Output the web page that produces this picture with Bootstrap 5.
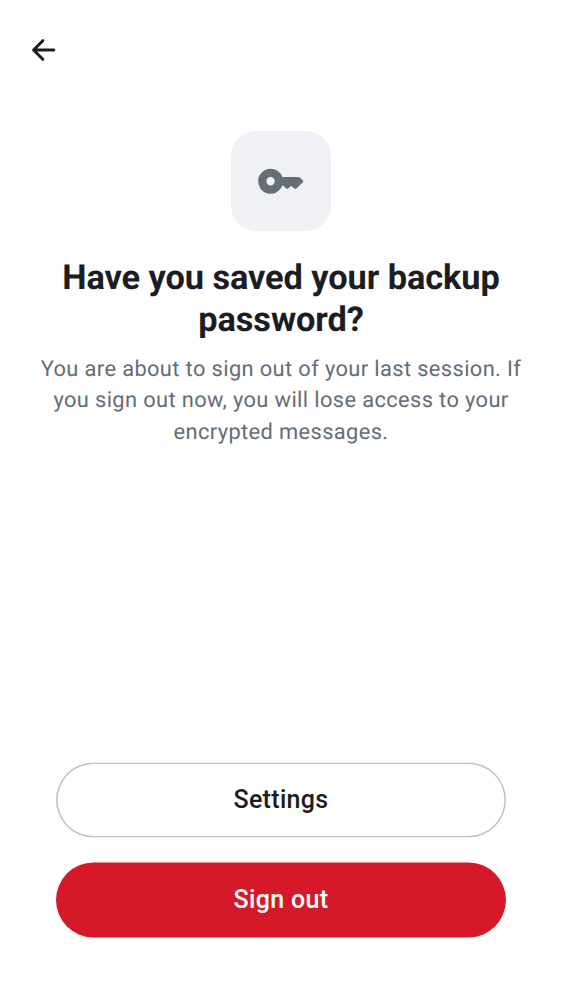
<!DOCTYPE html>
<html lang="en">
<head>
<meta charset="utf-8">
<meta name="viewport" content="width=device-width, initial-scale=1">
<title>Sign out</title>
<link href="https://cdn.jsdelivr.net/npm/bootstrap@5.3.0/dist/css/bootstrap.min.css" rel="stylesheet">
<style>
body { font-family: Roboto, sans-serif; background: #fff; color: #1b1d22; text-rendering: geometricPrecision; }
.screen { height: 1000px; padding: 31px 28px 62px; }
.back-btn { width: 31px; height: 38px; }
.key-tile { width: 100px; height: 100px; margin-top: 62px; border-radius: 25px; background: #f0f1f5; }
.headline { font-size: 34.375px; line-height: 42px; font-weight: 700; letter-spacing: -.08px; margin: 26px 0 13px; }
.message { font-size: 21.875px; line-height: 31.25px; letter-spacing: .37px; color: #656d77; margin: 0 -10px; }
.action { height: 75px; border: 0; border-radius: 38px; font-size: 25px; font-weight: 500; letter-spacing: .32px; padding-bottom: 7px; }
.action-outline { box-shadow: inset 0 0 0 1.56px #bdc3cc; color: #1b1d22; }
.action-danger, .action-danger:hover { background: #d51928; color: #fff; }
.actions { gap: 25px; margin: 0 28px; transform: translateY(-.5px); }
</style>
</head>
<body>
<main class="screen d-flex flex-column">
  <button class="btn back-btn border-0 p-0 d-flex align-items-center justify-content-center" aria-label="Back">
    <svg width="31" height="38" viewBox="0 0 31 38" class="flex-shrink-0" fill="none" stroke="#1b1d22" stroke-width="3" stroke-linecap="round" stroke-linejoin="round"><path d="M14.8 9.7 5.6 19l9.2 9.3M5.6 19h20.2"/></svg>
  </button>
  <div class="key-tile d-flex align-items-center justify-content-center align-self-center">
    <svg width="50" height="50" viewBox="0 0 50 50" fill="#656d77"><path fill-rule="evenodd" d="M14.6 12.7A12.5 12.5 0 1 0 26.4 29.4H27L30.4 32.4Q31.3 33.2 32.2 32.5L35 30.1 38.5 32.6Q39.4 33.3 40.3 32.5L46.9 26.3Q47.7 25.4 46.9 24.4L44 21.6Q43.3 21 42.4 21H26.4A12.5 12.5 0 0 0 14.6 12.7ZM14.6 21A4.2 4.2 0 1 1 14.6 29.4A4.2 4.2 0 1 1 14.6 21Z"/></svg>
  </div>
  <h1 class="headline text-center">Have you saved your backup<br>password?</h1>
  <p class="message text-center">You are about to sign out of your last session. If<br>you sign out now, you will lose access to your<br>encrypted messages.</p>
  <div class="actions d-grid mt-auto">
    <button class="btn action action-outline">Settings</button>
    <button class="btn action action-danger">Sign out</button>
  </div>
</main>
<script src="https://cdn.jsdelivr.net/npm/bootstrap@5.3.0/dist/js/bootstrap.bundle.min.js"></script>
</body>
</html>
